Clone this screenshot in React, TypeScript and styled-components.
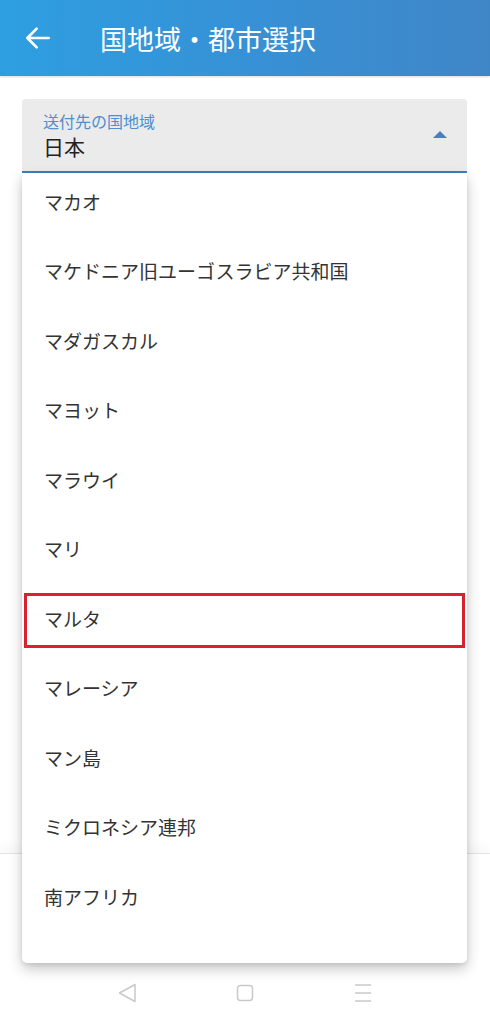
import React from 'react';
import styled, { createGlobalStyle } from 'styled-components';

const GlobalStyle = createGlobalStyle`
	html, body { margin: 0; padding: 0; background: #fff; }
	body { font-family: "Noto Sans CJK JP", "Noto Sans", sans-serif; }
`;

const Page = styled.div`
	width: 490px;
	height: 1024px;
	display: flex;
	flex-direction: column;
	overflow: hidden;
	position: relative;
`;

const Header = styled.header`
	height: 76px;
	flex: none;
	display: flex;
	align-items: center;
	gap: 46px;
	padding-left: 22px;
	background: linear-gradient(90deg, #2d9fe1 0%, #3791d6 50%, #3f86c7 100%);
	color: #fff;
	box-shadow: 0 1px 2px rgba(0, 0, 0, 0.15);
`;

const Title = styled.h1`
	margin: 0;
	font-size: 27px;
	font-weight: 400;
	letter-spacing: 0;
	line-height: 1;
`;

const Body = styled.main`
	flex: 1;
	position: relative;
	padding: 23px 23px 0 22px;
`;

const Field = styled.div`
	height: 72px;
	background: #ebebeb;
	border-radius: 4px 4px 0 0;
	border-bottom: 2px solid #3f7fc0;
	display: flex;
	align-items: center;
	padding: 0 22px 0 21px;
`;

const FieldText = styled.div`
	flex: 1;
	display: flex;
	flex-direction: column;
	gap: 2px;
`;

const Label = styled.span`
	font-size: 16px;
	line-height: 20px;
	color: #4d8fd0;
`;

const Value = styled.span`
	font-size: 21px;
	line-height: 26px;
	color: #222;
`;

const Caret = styled.span`
	width: 0;
	height: 0;
	border-left: 7px solid transparent;
	border-right: 7px solid transparent;
	border-bottom: 7px solid #4680c2;
	margin-right: -2px;
	margin-top: -2px;
`;

const Menu = styled.div`
	position: absolute;
	top: 97px;
	left: 22px;
	width: 445px;
	height: 790px;
	background: #fff;
	border-radius: 0 0 5px 5px;
	box-shadow: 0 6px 14px rgba(0, 0, 0, 0.22), 0 2px 4px rgba(0, 0, 0, 0.08);
	overflow: hidden;
	z-index: 2;
`;

const List = styled.ul`
	list-style: none;
	margin: -6.75px 0 0;
	padding: 0;
`;

const Item = styled.li<{ $marked?: boolean }>`
	height: 69.5px;
	display: flex;
	align-items: center;
	padding-left: 22px;
	font-size: 19px;
	color: #333;
	position: relative;

	&::after {
		content: '';
		display: ${(p) => (p.$marked ? 'block' : 'none')};
		position: absolute;
		top: 10px;
		bottom: 5px;
		left: 2px;
		right: 2px;
		border: 3px solid #d9222f;
	}
`;

const Footer = styled.footer`
	height: 171px;
	flex: none;
	border-top: 1px solid #e4e4e4;
	box-shadow: 0 -6px 12px rgba(0, 0, 0, 0.035);
	display: flex;
	align-items: flex-end;
	justify-content: center;
	gap: 84px;
	padding-bottom: 20px;
	box-sizing: border-box;
`;

const NavIcon = styled.svg`
	width: 34px;
	height: 22px;
`;

const countries = [
	'マカオ',
	'マケドニア旧ユーゴスラビア共和国',
	'マダガスカル',
	'マヨット',
	'マラウイ',
	'マリ',
	'マルタ',
	'マレーシア',
	'マン島',
	'ミクロネシア連邦',
	'南アフリカ',
];

const App = () => (
	<Page>
		<GlobalStyle />
		<Header>
			<svg width="32" height="32" viewBox="0 0 24 24" fill="none">
				<path d="M20 12H4.5M11 5l-7 7 7 7" stroke="#fff" strokeWidth="2" strokeLinecap="round" strokeLinejoin="round" />
			</svg>
			<Title>国地域・都市選択</Title>
		</Header>

		<Body>
			<Field>
				<FieldText>
					<Label>送付先の国地域</Label>
					<Value>日本</Value>
				</FieldText>
				<Caret />
			</Field>

			<Menu>
				<List>
					{ countries.map((name) => (
						<Item key={name} $marked={name === 'マルタ'}>{ name }</Item>
					)) }
				</List>
			</Menu>
		</Body>

		<Footer>
			<NavIcon viewBox="0 0 34 22">
				<path d="M25 2.5L9.5 11 25 19.5z" fill="none" stroke="#c9c9c9" strokeWidth="1.5" strokeLinejoin="round" />
			</NavIcon>
			<NavIcon viewBox="0 0 34 22">
				<rect x="9.5" y="3.5" width="15" height="15" rx="3" fill="none" stroke="#c9c9c9" strokeWidth="1.5" />
			</NavIcon>
			<NavIcon viewBox="0 0 34 22">
				<path d="M9 3h16M9 11h16M9 19h16" stroke="#c9c9c9" strokeWidth="1.5" />
			</NavIcon>
		</Footer>
	</Page>
);

export default App;
